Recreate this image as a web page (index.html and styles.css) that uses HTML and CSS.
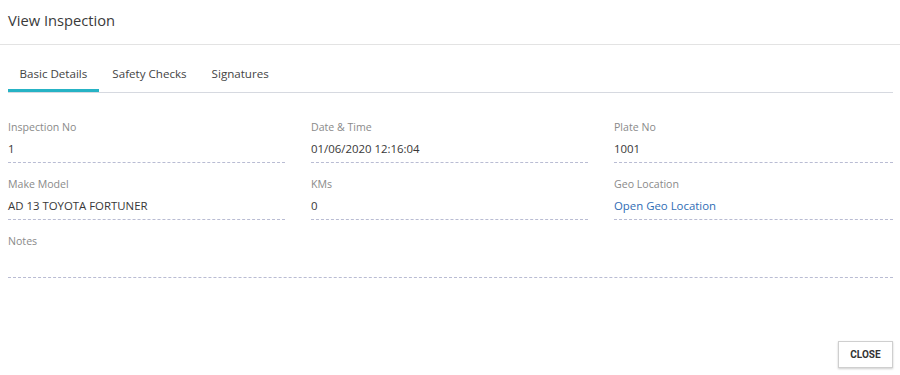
FILE: index.html
```html
<!DOCTYPE html>
<html lang="en">
<head>
    <meta charset="UTF-8">
    <title>View Inspection</title>
    <link rel="stylesheet" href="styles.css">
</head>
<body>
    <div class="dialog">
        <div class="dialog-title">View Inspection</div>
        <div class="dialog-body">
            <ul class="tabs">
                <li class="active">Basic Details</li>
                <li>Safety Checks</li>
                <li>Signatures</li>
            </ul>
            <div class="fields">
                <div class="field">
                    <div class="label">Inspection No</div>
                    <div class="value">1</div>
                </div>
                <div class="field">
                    <div class="label">Date &amp; Time</div>
                    <div class="value">01/06/2020 12:16:04</div>
                </div>
                <div class="field">
                    <div class="label">Plate No</div>
                    <div class="value">1001</div>
                </div>
                <div class="field">
                    <div class="label">Make Model</div>
                    <div class="value">AD 13 TOYOTA FORTUNER</div>
                </div>
                <div class="field">
                    <div class="label">KMs</div>
                    <div class="value">0</div>
                </div>
                <div class="field">
                    <div class="label">Geo Location</div>
                    <div class="value"><a href="#">Open Geo Location</a></div>
                </div>
                <div class="field notes">
                    <div class="label">Notes</div>
                    <div class="value"></div>
                </div>
            </div>
        </div>
        <div class="dialog-actions">
            <button class="btn">CLOSE</button>
        </div>
    </div>
</body>
</html>
```

FILE: styles.css
```css
*{
    margin: 0;
    padding: 0;
    box-sizing: border-box;
}
ul{
    list-style: none;
}
body{
    font-family: "Open Sans", sans-serif;
    color: #333;
    background: #fff;
}
.dialog{
    width: 900px;
    height: 375px;
    display: flex;
    flex-direction: column;
}
.dialog-title{
    height: 45px;
    padding: 10px 8px 0;
    font-size: 14.7px;
    color: #3a3a3a;
    border-bottom: 1px solid #e3e3e3;
}
.dialog-body{
    padding: 16px 7px 0 8px;
    flex: 1;
}
.tabs{
    display: flex;
    border-bottom: 1px solid #d6d9e0;
}
.tabs li{
    padding: 5px 12px 0 13px;
    font-size: 11.6px;
    color: #444;
    height: 31px;
}
.tabs li:first-child{
    padding-left: 11.5px;
}
.tabs li.active{
    border-bottom: 3px solid #26b3c5;
}
.fields{
    display: grid;
    grid-template-columns: 277px 277px 279px;
    column-gap: 26px;
    padding-top: 26px;
}
.field{
    border-bottom: 1px dashed #b9bcd3;
    height: 44px;
    margin-bottom: 13px;
}
.label{
    font-size: 10.6px;
    color: #8a8a8a;
    line-height: 16px;
}
.value{
    font-size: 11.4px;
    color: #383838;
    line-height: 17px;
    margin-top: 5px;
}
.value a{
    color: #2f6db5;
    text-decoration: none;
}
.notes{
    grid-column: 1 / 4;
    height: 45px;
}
.dialog-actions{
    display: flex;
    justify-content: flex-end;
    padding: 0 7px 7px 0;
}
.btn{
    width: 55px;
    height: 27px;
    background: #fff;
    border: 1px solid #cfcfcf;
    box-shadow: 0 1px 2px rgba(0,0,0,0.2);
    font-family: Roboto, sans-serif;
    font-weight: 700;
    font-size: 10px;
    color: #333;
}
```
